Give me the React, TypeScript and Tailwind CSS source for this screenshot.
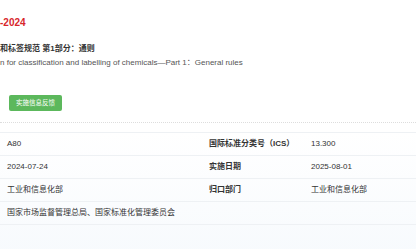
const rows = [
  { left: "A80", label: "国际标准分类号（ICS）", right: "13.300" },
  { left: "2024-07-24", label: "实施日期", right: "2025-08-01" },
  { left: "工业和信息化部", label: "归口部门", right: "工业和信息化部" },
];

export default function App() {
  return (
    <div className="w-[416px] h-[249px] overflow-hidden bg-white font-['Liberation_Sans','Noto_Sans_CJK_SC',sans-serif] text-[#333]">
      <div className="flex flex-col pt-[16px]">
        <h1 className="text-[10px] leading-[14px] font-bold text-[#d7262c]">-2024</h1>
        <h2 className="mt-[14px] text-[8px] leading-[10px] font-bold text-[#333]">和标签规范 第1部分：通则</h2>
        <p className="mt-[4px] text-[8px] leading-[10px] text-[#555]">
          n for classification and labelling of chemicals—Part 1：General rules
        </p>
        <div className="mt-[27px] flex pl-[9px]">
          <button className="flex h-[16px] w-[53px] items-center justify-center rounded-[2px] bg-[#5cb85c] text-[6.5px] leading-none text-white">
            实施信息反馈
          </button>
        </div>
        <div className="mt-[11px] border-t border-dotted border-[#ddd]" />
      </div>
      <div className="mt-[9px] h-[200px] bg-gradient-to-b from-white to-[#f2f7fc]">
        <table className="w-full border-collapse text-[8px]">
          <tbody>
            {rows.map((r) => (
              <tr key={r.label} className="h-[23px] border-t border-[#eef1f4]">
                <td className="w-[202px] pl-[7px]">{r.left}</td>
                <td className="w-[102px] pl-[7px] font-bold">{r.label}</td>
                <td className="pl-[7px]">{r.right}</td>
              </tr>
            ))}
            <tr className="h-[23px] border-y border-[#eef1f4]">
              <td colSpan={3} className="pl-[7px]">
                国家市场监督管理总局、国家标准化管理委员会
              </td>
            </tr>
          </tbody>
        </table>
      </div>
    </div>
  );
}
